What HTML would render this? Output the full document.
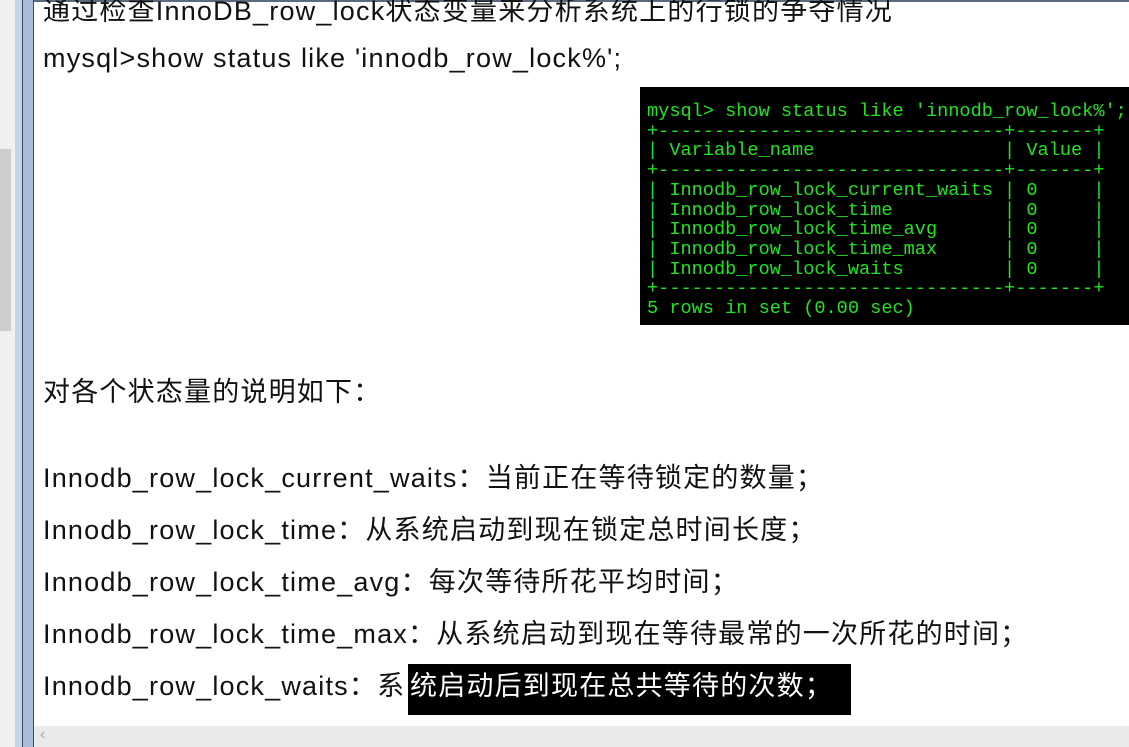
<!DOCTYPE html>
<html><head><meta charset="utf-8"><style>
body{margin:0;width:1129px;height:747px;overflow:hidden;background:#fff;position:relative;font-family:"Liberation Sans","Noto Sans CJK SC",sans-serif;}
.l{position:absolute;left:43px;font-size:27px;letter-spacing:1.2px;color:#111;white-space:nowrap;line-height:30px;}
#term{position:absolute;left:640px;top:87px;width:489px;height:238px;background:#000;}
#term pre{margin:0;position:absolute;left:7px;top:15px;font-family:"Liberation Mono",monospace;font-size:18.6px;line-height:19.7px;color:#1ee61e;}
</style></head><body>
<div style="position:absolute;left:0;top:0;width:15px;height:747px;background:#f0f0f0"></div>
<div style="position:absolute;left:0;top:149px;width:11px;height:182px;background:#cdcdcb"></div>
<div style="position:absolute;left:15px;top:0;width:7px;height:747px;background:#c4d6ec"></div>
<div style="position:absolute;left:22px;top:0;width:1px;height:747px;background:#3b4a66"></div>
<div style="position:absolute;left:23px;top:0;width:10px;height:747px;background:#a8bcd8"></div>
<div style="position:absolute;left:33px;top:0;width:1px;height:747px;background:#3b4a66"></div>
<div style="position:absolute;left:34px;top:0;width:1095px;height:2px;background:#5a6a80"></div>
<div class="l" style="top:-4px">通过检查InnoDB_row_lock状态变量来分析系统上的行锁的争夺情况</div>
<div class="l" style="top:43px">mysql&gt;show status like 'innodb_row_lock%';</div>
<div id="term"><pre>mysql&gt; show status like 'innodb_row_lock%';
+-------------------------------+-------+
| Variable_name                 | Value |
+-------------------------------+-------+
| Innodb_row_lock_current_waits | 0     |
| Innodb_row_lock_time          | 0     |
| Innodb_row_lock_time_avg      | 0     |
| Innodb_row_lock_time_max      | 0     |
| Innodb_row_lock_waits         | 0     |
+-------------------------------+-------+
5 rows in set (0.00 sec)</pre></div>
<div class="l" style="top:377px">对各个状态量的说明如下：</div>
<div class="l" style="top:463px">Innodb_row_lock_current_waits：当前正在等待锁定的数量；</div>
<div class="l" style="top:515px">Innodb_row_lock_time：从系统启动到现在锁定总时间长度；</div>
<div class="l" style="top:567px">Innodb_row_lock_time_avg：每次等待所花平均时间；</div>
<div class="l" style="top:619px">Innodb_row_lock_time_max：从系统启动到现在等待最常的一次所花的时间；</div>
<div class="l" style="top:671px">Innodb_row_lock_waits：系</div>
<div style="position:absolute;left:408px;top:664px;width:443px;height:51px;background:#000"></div>
<div class="l" style="top:671px;left:410px;color:#fff">统启动后到现在总共等待的次数；</div>
<div style="position:absolute;left:34px;top:726px;width:1095px;height:21px;background:#eaeaea"></div>
<div style="position:absolute;left:40px;top:726px;font-size:16px;color:#aaa">‹</div>
</body></html>
